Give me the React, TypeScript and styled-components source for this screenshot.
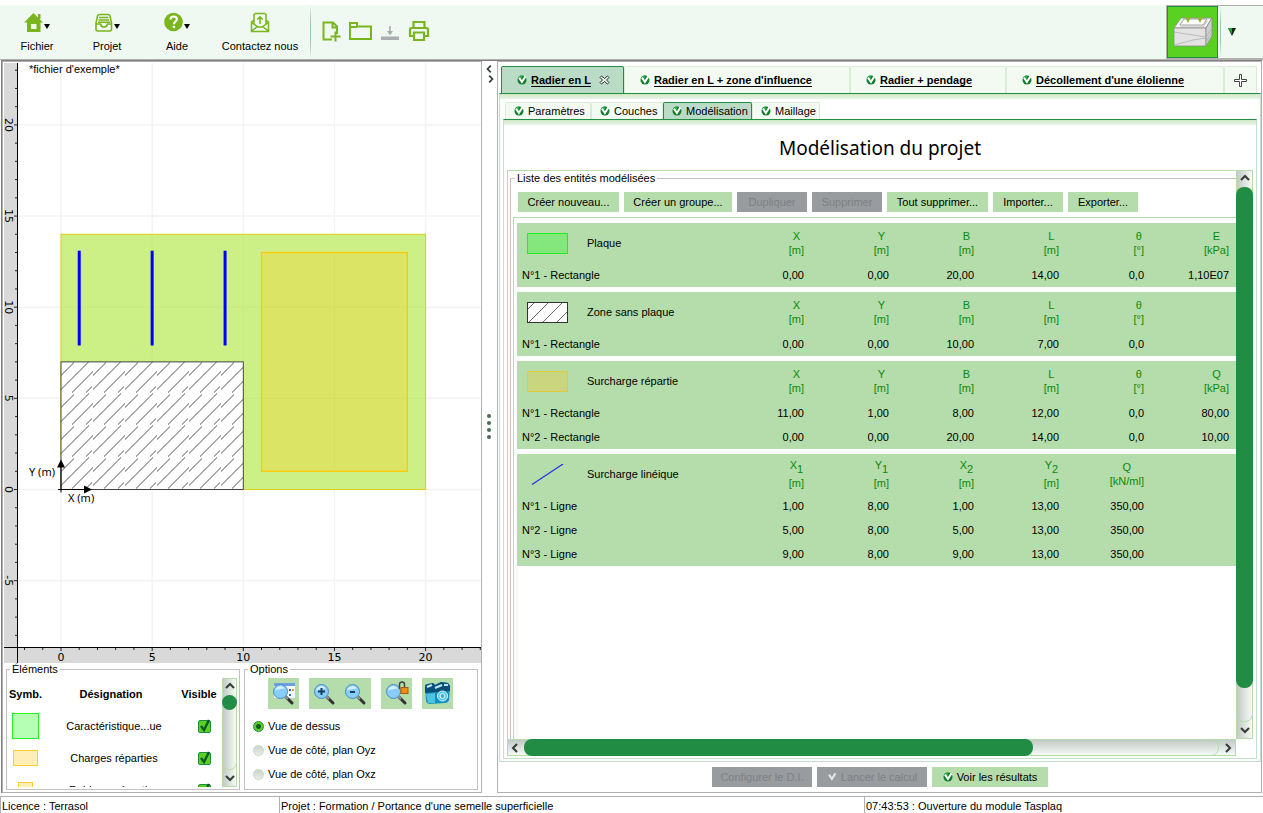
import React from 'react';
import styled, { createGlobalStyle, css } from 'styled-components';

const c = {
  green: '#218c44',
  pale: '#b5dcab',
  icon: '#7ab51d',
  grey: '#b0b0b0',
  line: '#c0c0c0',
  unit: '#0a8a0a',
};

const GlobalStyle = createGlobalStyle`
  * { box-sizing: border-box; }
  html, body { margin: 0; padding: 0; background: #fff; }
  body, button, input {
    font-family: "Liberation Sans", Arial, sans-serif;
    font-size: 11px;
    line-height: 12px;
    color: #000;
  }
  button { border: 0; margin: 0; padding: 0; background: none; }
  svg { display: block; }
`;

const Page = styled.div`
  display: flex;
  flex-direction: column;
  min-height: 100vh;
  padding-top: 5px;
`;

/* ---------- toolbar ---------- */

const Toolbar = styled.header`
  display: flex;
  align-items: stretch;
  height: 55px;
  padding-left: 2px;
  background: #eff9f2;
  border-bottom: 1px solid ${c.grey};
`;

const ToolMenu = styled.button<{ $wide?: boolean }>`
  display: flex;
  flex-direction: column;
  align-items: center;
  justify-content: space-between;
  width: ${p => (p.$wide ? 96 : 70)}px;
  padding: 7px 0;
`;

const ToolIcon = styled.span`
  display: flex;
  align-items: center;
  height: 22px;
`;

const Separator = styled.span`
  width: 1px;
  margin: 0 2px;
  background: linear-gradient(#eff9f2, #9cc9a6 30%, #9cc9a6 70%, #eff9f2);
`;

const QuickTools = styled.div`
  display: flex;
  align-items: center;
  gap: 7px;
  padding: 0 7px 2px;
`;

const ModuleArea = styled.div`
  display: flex;
  margin-left: auto;
  border: 1px solid ${c.grey};
  border-right: 0;
`;

const ModuleButton = styled.button`
  width: 51px;
  background: #58d121;
  border: 1px solid ${c.green};
  display: flex;
  align-items: center;
  justify-content: center;
`;

const ModuleArrow = styled.button`
  width: 40px;
  padding-left: 5px;
`;

/* ---------- main frame ---------- */

const Main = styled.main`
  flex: 1;
  display: flex;
  margin: 0 1px 3px 1px;
  border-top: 1px solid #808080;
  border-left: 1px solid #808080;
`;

const LeftPanel = styled.section`
  display: flex;
  flex-direction: column;
  flex: 0 0 480px;
  border: 1px solid ${c.grey};
  padding: 1px 0 2px 1px;
`;

const Splitter = styled.div`
  flex: 0 0 15px;
  display: flex;
  flex-direction: column;
  align-items: center;
  justify-content: center;
  position: relative;
  padding-right: 1px;
`;

const SplitterArrows = styled.div`
  position: absolute;
  top: 3px;
  left: 3px;
`;

const RightPanel = styled.section`
  flex: 1;
  min-width: 0;
  display: flex;
  flex-direction: column;
  border: 1px solid ${c.grey};
  padding: 4px 0 5px 1px;
`;

/* ---------- plot ---------- */

const Plot = styled.div`
  flex: 1;
  display: grid;
  grid-template-columns: 14px 1fr;
  grid-template-rows: minmax(0, 1fr) 16px;
`;

const Ruler = styled.svg`
  width: 100%;
  height: 100%;
  overflow: visible;
  background: #d9d9d9;
  font-family: "DejaVu Sans", sans-serif;
  font-size: 11px;
`;

const Canvas = styled.svg`
  width: 100%;
  height: 100%;
  background: #fff;
`;

const Corner = styled.div`
  background: #d9d9d9;
  border-top: 1px solid #000;
  border-right: 1px solid #000;
`;

const ORIGIN_X = 43;
const ORIGIN_Y = 426.5;
const UNIT = 18.23;
const sx = (v: number) => ORIGIN_X + v * UNIT;
const sy = (v: number) => ORIGIN_Y - v * UNIT;
const range = (a: number, b: number) => Array.from({ length: b - a + 1 }, (_, i) => a + i);
const fives = [-5, 0, 5, 10, 15, 20];

function PlotView() {
  return (
    <Plot>
      <Ruler>
        <line x1="13.5" x2="13.5" y1="0" y2="100%" stroke="#000" />
        {range(-8, 23).map(v => (
          <line key={v} x1={v % 5 ? 11 : 10} x2="13" y1={sy(v)} y2={sy(v)} stroke="#222" />
        ))}
        {fives.map(v => (
          <text key={v} transform={`translate(1 ${sy(v)}) rotate(90)`} textAnchor="middle">{v}</text>
        ))}
      </Ruler>
      <Canvas>
        <defs>
          <pattern id="hatch" x={sx(0)} y={sy(0)} width="32" height="32" patternUnits="userSpaceOnUse">
            <path d="M0 14 13 1M0 28 28 0M11 31 32 10M25 31 31 25" stroke="#555" fill="none" />
          </pattern>
        </defs>
        {fives.map(v => (
          <g key={v} stroke="#f3f3f3" strokeWidth="1.5">
            <line x1={sx(v)} x2={sx(v)} y1="0" y2="100%" />
            <line x1="0" x2="100%" y1={sy(v)} y2={sy(v)} />
          </g>
        ))}
        <rect x={sx(0)} y={sy(14)} width={20 * UNIT} height={14 * UNIT} fill="#ccf085" stroke="#e0cc10" strokeWidth="1" />
        <g stroke="#c6ea80">
          <line x1={sx(10)} x2={sx(10)} y1={sy(13.9)} y2={sy(0)} />
          <line x1={sx(5)} x2={sx(5)} y1={sy(13.9)} y2={sy(0)} />
          <line x1={sx(0.1)} x2={sx(19.9)} y1={sy(10)} y2={sy(10)} />
          <line x1={sx(0.1)} x2={sx(19.9)} y1={sy(5)} y2={sy(5)} />
        </g>
        <rect x={sx(11)} y={sy(13)} width={8 * UNIT} height={12 * UNIT} fill="#dbe465" stroke="#fcc800" strokeWidth="1.3" />
        <g stroke="#d5de60">
          <line x1={sx(15)} x2={sx(15)} y1={sy(12.9)} y2={sy(1.1)} />
          <line x1={sx(11.1)} x2={sx(18.9)} y1={sy(10)} y2={sy(10)} />
          <line x1={sx(11.1)} x2={sx(18.9)} y1={sy(5)} y2={sy(5)} />
        </g>
        <rect x={sx(0)} y={sy(7)} width={10 * UNIT} height={7 * UNIT} fill="#fff" />
        <rect x={sx(0)} y={sy(7)} width={10 * UNIT} height={7 * UNIT} fill="url(#hatch)" stroke="#444" />
        {[1, 5, 9].map(v => (
          <line key={v} x1={sx(v)} x2={sx(v)} y1={sy(13.1)} y2={sy(7.9)} stroke="#0000fa" strokeWidth="3" />
        ))}
        <g stroke="#000" strokeWidth="1">
          <line x1={sx(0) - 3} x2={sx(0) + 24} y1={sy(0)} y2={sy(0)} />
          <line x1={sx(0)} x2={sx(0)} y1={sy(0) + 3} y2={sy(0) - 24} />
        </g>
        <path d={`M${sx(0) + 23} ${sy(0) - 4}l8 4-8 4zM${sx(0) - 4} ${sy(0) - 22}l4-8 4 8z`} />
        <text x="11" y="10" fontSize="11">*fichier d'exemple*</text>
        <g fontFamily="Noto Sans, sans-serif" fontSize="11">
          <text x={sx(0) - 32} y={sy(0) - 14}>Y (m)</text>
          <text x={sx(0) + 7} y={sy(0) + 12}>X (m)</text>
        </g>
      </Canvas>
      <Corner />
      <Ruler>
        <line x1="0" x2="100%" y1="0.5" y2="0.5" stroke="#000" />
        {range(-2, 23).map(v => (
          <line key={v} x1={sx(v)} x2={sx(v)} y1="1" y2={v % 5 ? 3 : 4} stroke="#222" />
        ))}
        {fives.slice(1).map(v => (
          <text key={v} x={sx(v)} y="14" textAnchor="middle">{v}</text>
        ))}
      </Ruler>
    </Plot>
  );
}

/* ---------- shared controls ---------- */

const Group = styled.fieldset<{ $open?: boolean }>`
  min-width: 0;
  margin: 0;
  padding: 3px 1px 2px;
  border: 1px solid ${c.line};
  ${p => p.$open && css`
    border-right: 0;
    border-bottom: 0;
    padding: 8px 0 0 2px;
    flex: 1;
    display: flex;
    flex-direction: column;
  `}
`;

const GroupTitle = styled.legend`
  margin-left: 2px;
  padding: 0 2px;
`;

const ActionButton = styled.button<{ $width: number }>`
  display: flex;
  align-items: center;
  justify-content: center;
  gap: 4px;
  width: ${p => p.$width}px;
  height: 20px;
  white-space: nowrap;
  background: ${c.pale};
  &:disabled { background: #999c9f; color: #7d8083; }
`;

const Bar = styled.div<{ $horizontal?: boolean }>`
  display: flex;
  flex-direction: ${p => (p.$horizontal ? 'row' : 'column')};
  border: 1px solid ${c.pale};
  background: linear-gradient(${p => (p.$horizontal ? '180deg' : '90deg')}, #c2cac5, #f6faf7);
`;

const BarButton = styled.button`
  flex: 0 0 16px;
  display: flex;
  align-items: center;
  justify-content: center;
`;

const Track = styled.div<{ $horizontal?: boolean }>`
  flex: 1;
  display: flex;
  flex-direction: ${p => (p.$horizontal ? 'row' : 'column')};
  margin: ${p => (p.$horizontal ? '-1px 0' : '0 -1px')};
  border: 1px solid ${c.pale};
  border-radius: 8px;
`;

const Thumb = styled.div<{ $size: string }>`
  flex: 0 0 ${p => p.$size};
  margin: -1px;
  border-radius: 8px;
  background: ${c.green};
`;

const chevrons = {
  up: 'M1 6 5 2 9 6',
  down: 'M1 3 5 7 9 3',
  left: 'M6 1 2 5 6 9',
  right: 'M4 1 8 5 4 9',
};

function Chevron({ dir, small }: { dir: keyof typeof chevrons; small?: boolean }) {
  return (
    <svg width="10" height="10" viewBox={small ? '-1 -1 12 12' : '0 0 10 10'} fill="none" stroke="#333c36" strokeWidth="2">
      <path d={chevrons[dir]} />
    </svg>
  );
}

function ScrollBar({ horizontal, size }: { horizontal?: boolean; size: string }) {
  return (
    <Bar $horizontal={horizontal}>
      <BarButton aria-label={horizontal ? 'Gauche' : 'Haut'}><Chevron dir={horizontal ? 'left' : 'up'} /></BarButton>
      <Track $horizontal={horizontal}><Thumb $size={size} /></Track>
      <BarButton aria-label={horizontal ? 'Droite' : 'Bas'}><Chevron dir={horizontal ? 'right' : 'down'} /></BarButton>
    </Bar>
  );
}

function StatusDot({ muted }: { muted?: boolean }) {
  return (
    <svg width="10" height="10" viewBox="0 0 10 10">
      {!muted && <circle cx="5" cy="5" r="4.5" fill="#0f7d2b" />}
      {!muted && <path d="M1 2.500A4.500 4.500 0 0 1 5 .5L5 4z" fill="#22a83e" />}
      <path d="M2 2.600 4.900 7 8.400 1.400" fill="none" stroke={muted ? '#e4e6e7' : '#fff'} strokeWidth="2" />
    </svg>
  );
}

/* ---------- lower left ---------- */

const LowerLeft = styled.div`
  display: grid;
  grid-template-columns: 234px 1fr;
  gap: 4px;
  margin: 0 3px 0 2px;
`;

const ElementsBody = styled.div`
  display: grid;
  grid-template-columns: 1fr 15px;
  height: 109px;
  margin-right: 1px;
`;

const ElementsClip = styled.div`
  overflow: hidden;
`;

const ElementsTable = styled.table`
  width: 211px;
  table-layout: fixed;
  border-collapse: collapse;
  text-align: center;
  th, td { height: 32px; padding: 0; white-space: nowrap; }
  td:nth-child(2) { padding-left: 6px; }
  td:nth-child(3) { padding-left: 10px; }
`;

const Swatch = styled.span<{ $w: number; $h: number; $fill: string; $line: string }>`
  display: block;
  width: ${p => p.$w}px;
  height: ${p => p.$h}px;
  margin: 0 auto;
  background: ${p => p.$fill};
  border: 1px solid ${p => p.$line};
`;

const TickWrap = styled.span`
  position: relative;
  display: block;
  width: 13px;
  height: 13px;
  margin: 0 auto;
  svg { position: absolute; left: 0; bottom: 0; pointer-events: none; }
`;

const Tick = styled.input`
  appearance: none;
  display: block;
  width: 13px;
  height: 13px;
  margin: 0;
  border: 1px solid ${c.green};
  border-radius: 2px;
  background: #58d121;
`;

const elements = [
  { name: 'Caractéristique...ue', w: 27, h: 26, fill: '#b5ffb5', line: '#2df02d' },
  { name: 'Charges réparties', w: 25, h: 16, fill: '#ffeeb5', line: '#ffcc33' },
  { name: 'Raideurs réparties', w: 15, h: 16, fill: '#ffeeb5', line: '#ffcc33' },
];

const OptionIcons = styled.div`
  display: flex;
  gap: 10px;
  padding-left: 22px;
`;

const IconGroup = styled.div`
  display: flex;
  background: ${c.pale};
`;

const IconButton = styled.button`
  width: 31px;
  height: 31px;
  display: flex;
  align-items: center;
  justify-content: center;
`;

const RadioList = styled.div`
  padding: 5px 0 0 7px;
`;

const RadioLabel = styled.label`
  display: flex;
  align-items: center;
  gap: 4px;
  height: 24px;
`;

const Radio = styled.input`
  appearance: none;
  width: 11px;
  height: 11px;
  margin: 0;
  border-radius: 50%;
  border: 1px solid #c3dcc3;
  background: linear-gradient(#c8d2cb, #e8eeea);
  &:checked {
    border-color: ${c.green};
    background: radial-gradient(circle, #0c5c22 0 2px, #58d121 3px);
  }
`;

function Lens({ children, before }: { children?: React.ReactNode; before?: React.ReactNode }) {
  return (
    <svg width="25" height="25" viewBox="0 0 25 25">
      {before}
      <path d="M15 16 21 22" stroke="#333" strokeWidth="3" strokeLinecap="round" />
      <path d="M14 15 17 18" stroke="#999" strokeWidth="2" />
      <circle cx="9.500" cy="10.500" r="7" fill="#86cdf7" stroke="#4d8cc2" strokeWidth="1" />
      <path d="M4 9.500a5.500 5.500 0 0 1 10-2c-3 0-7 1-10 2z" fill="#d4effd" />
      {children}
    </svg>
  );
}

function LeftColumn() {
  return (
    <LeftPanel>
      <PlotView />
      <LowerLeft>
        <Group>
          <GroupTitle>Éléments</GroupTitle>
          <ElementsBody>
            <ElementsClip>
              <ElementsTable>
                <colgroup><col width="35" /><col /><col width="40" /></colgroup>
                <thead><tr><th>Symb.</th><th>Désignation</th><th>Visible</th></tr></thead>
                <tbody>
                  {elements.map(e => (
                    <tr key={e.name}>
                      <td><Swatch $w={e.w} $h={e.h} $fill={e.fill} $line={e.line} /></td>
                      <td>{e.name}</td>
                      <td>
                        <TickWrap>
                          <Tick type="checkbox" defaultChecked aria-label={e.name} />
                          <svg width="14" height="15" viewBox="0 0 14 15">
                            <path d="M3 8 6 12 11 2" fill="none" stroke="#0f5a2a" strokeWidth="2.400" />
                          </svg>
                        </TickWrap>
                      </td>
                    </tr>
                  ))}
                </tbody>
              </ElementsTable>
            </ElementsClip>
            <ScrollBar size="15px" />
          </ElementsBody>
        </Group>
        <Group>
          <GroupTitle>Options</GroupTitle>
          <OptionIcons>
            <IconGroup>
              <IconButton aria-label="Zoom étendu">
                <Lens before={<g><path d="M3 2h21v15H3z" fill="#f4f8fc" /><path d="M3 2h21v3H3z" fill="#6f9fe0" /><path d="M18 8h2v2h-2zM18 13h2v2h-2z" fill="#3c64c8" /><path d="M21 8h2v2h-2z" fill="#e09a30" /></g>} />
              </IconButton>
            </IconGroup>
            <IconGroup>
              <IconButton aria-label="Zoom avant">
                <Lens><path d="M6 10.500h7M9.500 7v7" stroke="#1b3c60" strokeWidth="2" /></Lens>
              </IconButton>
              <IconButton aria-label="Zoom arrière">
                <Lens><path d="M7 11h5" stroke="#1b3c60" strokeWidth="2" /></Lens>
              </IconButton>
            </IconGroup>
            <IconGroup>
              <IconButton aria-label="Verrouiller le zoom">
                <Lens>
                  <path d="M15.500 8V3.500a2.500 2.500 0 0 1 5 0V6" fill="none" stroke="#444" strokeWidth="1.500" />
                  <rect x="17" y="6.500" width="7" height="6" fill="#f08c14" stroke="#a85a08" />
                </Lens>
              </IconButton>
            </IconGroup>
            <IconGroup>
              <IconButton aria-label="Capture">
                <svg width="27" height="25" viewBox="0 0 27 25">
                  <path d="M1 6Q1 3 4 3L9 2 11 4 17 1 24 2 26 5 25 19Q24 22 21 22L5 23Q3 23 2 20z" fill="#1590bd" />
                  <path d="M1 6Q1 3 4 3L9 2 11 4 17 1 24 2 26 5 26 10 1 12z" fill="#0b4f78" />
                  <path d="M3 6 8 4M11 7 18 4M20 4 24 4" stroke="#bfeaf8" strokeWidth="2" />
                  <path d="M2 13 11 12 11 22 4 22z" fill="#4cc3e6" />
                  <circle cx="18.500" cy="15" r="5" fill="#54c8ea" stroke="#d9f5fc" />
                  <circle cx="18.500" cy="15" r="2.500" fill="#3fb0d8" stroke="#e8fbff" />
                </svg>
              </IconButton>
            </IconGroup>
          </OptionIcons>
          <RadioList>
            {['Vue de dessus', 'Vue de côté, plan Oyz', 'Vue de côté, plan Oxz'].map((t, i) => (
              <RadioLabel key={t}><Radio type="radio" name="vue" defaultChecked={i === 0} />{t}</RadioLabel>
            ))}
          </RadioList>
        </Group>
      </LowerLeft>
    </LeftPanel>
  );
}

/* ---------- tabs ---------- */

const Tabs = styled.nav<{ $inner?: boolean }>`
  display: flex;
  height: ${p => (p.$inner ? 17 : 27)}px;
  padding-left: 2px;
  font-weight: ${p => (p.$inner ? 400 : 700)};
`;

const Tab = styled.button<{ $active?: boolean; $width: number; $link?: boolean }>`
  display: flex;
  align-items: center;
  gap: 4px;
  flex: 0 1 ${p => p.$width}px;
  padding-left: ${p => (p.$link ? 15 : 8)}px;
  font-weight: inherit;
  white-space: nowrap;
  background: #f3faf2;
  border: 1px solid #d8ecd6;
  border-bottom: 0;
  border-radius: 2px 2px 0 0;
  ${p => p.$active && css`
    background: #badcc6;
    border-color: ${c.green};
  `}
`;

const TabText = styled.span<{ $link?: boolean }>`
  ${p => p.$link && css`
    margin-right: 4px;
    text-decoration: underline;
    text-underline-offset: 2px;
  `}
`;

const Pane = styled.div<{ $outer?: boolean }>`
  flex: 1;
  display: flex;
  flex-direction: column;
  min-height: 0;
  border: 1px solid #c5dfcf;
  border-top: 1px solid ${c.green};
  padding: ${p => (p.$outer ? '8px 3px 2px' : '0 3px 2px')};
  background: linear-gradient(#d0e8c2, #e9f3ea 5px, #fff 5px);
`;

const Title = styled.h1`
  margin: 0;
  height: 50px;
  padding-top: 5px;
  line-height: 46px;
  font-family: "Noto Sans", "Open Sans", sans-serif;
  font-size: 19px;
  font-weight: 400;
  text-align: center;
`;

const ScrollArea = styled.div`
  flex: 1;
  display: grid;
  grid-template-columns: minmax(0, 1fr) 17px;
  grid-template-rows: minmax(0, 1fr) 17px;
`;

const Viewport = styled.div`
  display: flex;
  flex-direction: column;
  overflow: hidden;
  border: 1px solid ${c.pale};
  border-width: 1px 0 0 1px;
  padding: 1px 0 0 2px;
`;

const Actions = styled.div`
  display: flex;
  gap: 5px;
  padding: 0 0 5px 5px;
`;

const EntityList = styled.div`
  flex: 1;
  display: flex;
  flex-direction: column;
  gap: 5px;
  border-left: 1px solid ${c.pale};
  border-top: 1px solid ${c.pale};
  padding: 5px 0 0 3px;
`;

const EntityTable = styled.table`
  width: 100%;
  table-layout: fixed;
  border-collapse: collapse;
  background: ${c.pale};
  th, td { padding: 0 7px 0 0; font-weight: 400; text-align: right; height: 24px; }
  thead th { height: 40px; }
  th:first-child { padding-left: 5px; text-align: left; }
`;

const EntityName = styled.span`
  display: flex;
  align-items: center;
  gap: 19px;
  padding-left: 5px;
`;

const Heading = styled.span`
  display: inline-block;
  line-height: 14px;
  text-align: center;
  vertical-align: middle;
  color: ${c.unit};
  sub { font-size: 11px; line-height: 14px; vertical-align: -4px; }
`;

const FooterActions = styled.div`
  display: flex;
  justify-content: center;
  gap: 5px;
  padding-top: 5px;
`;

type Col = [string, string, string?];
const geometry: Col[] = [['X', '[m]'], ['Y', '[m]'], ['B', '[m]'], ['L', '[m]'], ['θ', '[°]']];

const entities: { name: string; symbol: React.ReactNode; cols: Col[]; rows: string[][] }[] = [
  {
    name: 'Plaque',
    symbol: <rect x="0.5" y="0.5" width="40" height="20" fill="#84e77e" stroke="#1fee1f" />,
    cols: [...geometry, ['E', '[kPa]']],
    rows: [['N°1 - Rectangle', '0,00', '0,00', '20,00', '14,00', '0,0', '1,10E07']],
  },
  {
    name: 'Zone sans plaque',
    symbol: (
      <g fill="none">
        <rect x="0.5" y="0.5" width="40" height="20" fill="#fff" stroke="#333" />
        <path d="M1 7 7 1M2 20 21 1M16 20 35 1M30 20 40 10" stroke="#666" />
      </g>
    ),
    cols: geometry,
    rows: [['N°1 - Rectangle', '0,00', '0,00', '10,00', '7,00', '0,0']],
  },
  {
    name: 'Surcharge répartie',
    symbol: <rect x="0.5" y="0.5" width="40" height="20" fill="#cad580" stroke="#e6c93a" />,
    cols: [...geometry, ['Q', '[kPa]']],
    rows: [
      ['N°1 - Rectangle', '11,00', '1,00', '8,00', '12,00', '0,0', '80,00'],
      ['N°2 - Rectangle', '0,00', '0,00', '20,00', '14,00', '0,0', '10,00'],
    ],
  },
  {
    name: 'Surcharge linéique',
    symbol: <path d="M5 20.500 36 0" stroke="#2d35e0" strokeWidth="1.300" />,
    cols: [['X', '[m]', '1'], ['Y', '[m]', '1'], ['X', '[m]', '2'], ['Y', '[m]', '2'], ['Q', '[kN/ml]']],
    rows: [
      ['N°1 - Ligne', '1,00', '8,00', '1,00', '13,00', '350,00'],
      ['N°2 - Ligne', '5,00', '8,00', '5,00', '13,00', '350,00'],
      ['N°3 - Ligne', '9,00', '8,00', '9,00', '13,00', '350,00'],
    ],
  },
];

function Entity({ name, symbol, cols, rows }: (typeof entities)[number]) {
  const blanks = range(1, 6 - cols.length);
  return (
    <EntityTable>
      <colgroup><col />{range(1, 6).map(i => <col key={i} width="85" />)}</colgroup>
      <thead>
        <tr>
          <th scope="col"><EntityName><svg width="41" height="21">{symbol}</svg>{name}</EntityName></th>
          {cols.map(([label, unit, index], i) => (
            <th key={i} scope="col"><Heading>{label}{index && <sub>{index}</sub>}<br />{unit}</Heading></th>
          ))}
          {blanks.map(i => <th key={'b' + i} />)}
        </tr>
      </thead>
      <tbody>
        {rows.map(([head, ...values]) => (
          <tr key={head}>
            <th scope="row">{head}</th>
            {values.map((v, i) => <td key={i}>{v}</td>)}
            {blanks.map(i => <td key={'b' + i} />)}
          </tr>
        ))}
      </tbody>
    </EntityTable>
  );
}

function RightColumn() {
  return (
    <RightPanel>
      <Tabs>
        <Tab $active $link $width={123}>
          <StatusDot /><TabText $link>Radier en L</TabText>
          <svg width="11" height="10" viewBox="0 0 11 10">
            <path d="M2.500 1 5.500 3.500 8.500 1 10 2.500 7.500 5 10 7.500 8.500 9 5.500 6.500 2.500 9 1 7.500 3.500 5 1 2.500z" fill="#e8f3ec" stroke="#333" />
          </svg>
        </Tab>
        <Tab $link $width={226}><StatusDot /><TabText $link>Radier en L + zone d'influence</TabText></Tab>
        <Tab $link $width={156}><StatusDot /><TabText $link>Radier + pendage</TabText></Tab>
        <Tab $link $width={218}><StatusDot /><TabText $link>Décollement d'une élolienne</TabText></Tab>
        <Tab $width={33} aria-label="Ajouter un onglet">
          <svg width="15" height="15" viewBox="0 0 15 15">
            <path d="M6.500 1.500h2v5h5v2h-5v5h-2v-5h-5v-2h5z" fill="#fff" stroke="#444" />
          </svg>
        </Tab>
      </Tabs>
      <Pane $outer>
        <Tabs $inner>
          <Tab $width={86}><StatusDot /><TabText>Paramètres</TabText></Tab>
          <Tab $width={72}><StatusDot /><TabText>Couches</TabText></Tab>
          <Tab $width={89} $active><StatusDot /><TabText>Modélisation</TabText></Tab>
          <Tab $width={68}><StatusDot /><TabText>Maillage</TabText></Tab>
        </Tabs>
        <Pane>
          <Title>Modélisation du projet</Title>
          <ScrollArea>
            <Viewport>
              <Group $open>
                <GroupTitle>Liste des entités modélisées</GroupTitle>
                <Actions>
                  <ActionButton $width={101}>Créer nouveau...</ActionButton>
                  <ActionButton $width={108}>Créer un groupe...</ActionButton>
                  <ActionButton $width={70} disabled>Dupliquer</ActionButton>
                  <ActionButton $width={70} disabled>Supprimer</ActionButton>
                  <ActionButton $width={101}>Tout supprimer...</ActionButton>
                  <ActionButton $width={70}>Importer...</ActionButton>
                  <ActionButton $width={70}>Exporter...</ActionButton>
                </Actions>
                <EntityList>
                  {entities.map(e => <Entity key={e.name} {...e} />)}
                </EntityList>
              </Group>
            </Viewport>
            <ScrollBar size="94%" />
            <ScrollBar horizontal size="73.4%" />
          </ScrollArea>
        </Pane>
      </Pane>
      <FooterActions>
        <ActionButton $width={100} disabled>Configurer le D.I.</ActionButton>
        <ActionButton $width={110} disabled><StatusDot muted />Lancer le calcul</ActionButton>
        <ActionButton $width={116}><StatusDot />Voir les résultats</ActionButton>
      </FooterActions>
    </RightPanel>
  );
}

/* ---------- status bar ---------- */

const StatusBar = styled.footer`
  display: grid;
  grid-template-columns: 279px 585fr 399fr;
  border-top: 1px solid ${c.grey};
`;

const StatusCell = styled.div`
  height: 16px;
  padding: 3px 0 0 1px;
  border-left: 1px solid ${c.grey};
  white-space: nowrap;
`;

const Caret = () => (
  <svg width="6" height="22" viewBox="0 0 6 22"><path d="M0 12h6l-3 5z" /></svg>
);

export default function App() {
  return (
    <>
      <GlobalStyle />
      <Page>
        <Toolbar>
          <ToolMenu>
            <ToolIcon>
              <svg width="20" height="22" viewBox="0 0 20 22">
                <path fillRule="evenodd" fill={c.icon} d="M9.500 1 19 10.500H16.500V20H3V10.500H0zM7 12v5h5.500v-5z" />
                <path d="M14 2h2.500v5H14z" fill={c.icon} />
              </svg>
              <Caret />
            </ToolIcon>
            Fichier
          </ToolMenu>
          <ToolMenu>
            <ToolIcon>
              <svg width="20" height="22" viewBox="0 0 20 22" fill="none" stroke={c.icon} strokeWidth="1.600">
                <path d="M2 11 3.500 4Q4 2.500 5.500 2.500h8.500Q15.500 2.500 16 4l1.500 7v6.500q0 1.500-1.500 1.500H3.500Q2 19 2 17.500zM2 12h4.500q.5 3 3.500 3t3.500-3h4M5 5.500h9.500M4.500 8h10.500M4 10.200h12" />
              </svg>
              <Caret />
            </ToolIcon>
            Projet
          </ToolMenu>
          <ToolMenu>
            <ToolIcon>
              <svg width="20" height="22" viewBox="0 0 20 22" fill="none">
                <circle cx="9.500" cy="10" r="9.300" fill={c.icon} />
                <path d="M6.500 7.500q0-3 3.200-3t3.200 2.700c0 2.300-3 2.300-3 5" stroke="#fff" strokeWidth="2.200" />
                <path d="M8.700 13.800h2.400v2.300H8.700z" fill="#fff" />
              </svg>
              <Caret />
            </ToolIcon>
            Aide
          </ToolMenu>
          <ToolMenu $wide>
            <ToolIcon>
              <svg width="20" height="22" viewBox="0 0 20 22" fill="none" stroke={c.icon} strokeWidth="1.500">
                <path d="M4 8 1.500 10v9.500h17V10L16 8M4 12V2.500L5.500 1.500h9L16 2.500V12M1.500 10.500l6.500 4.500h4l6.500-4.500M1.500 19l6-4.500M18.500 19l-6-4.500M10 12V5M7.200 7.500 10 4.700l2.800 2.800" />
              </svg>
            </ToolIcon>
            Contactez nous
          </ToolMenu>
          <Separator />
          <QuickTools>
            <button aria-label="Nouveau">
              <svg width="22" height="24" viewBox="0 0 22 24" fill="none" stroke={c.icon} strokeWidth="2">
                <path d="M12 20.500H3.500V3.500h9.500l4 4V15M12.500 4v4.500H17M10.500 17.500h10M15.500 12.500v10" />
              </svg>
            </button>
            <button aria-label="Ouvrir">
              <svg width="23" height="22" viewBox="0 0 23 22" fill="none" stroke={c.icon} strokeWidth="2">
                <path d="M1 19V3h7v3.500h14V19zM1 7h7" />
              </svg>
            </button>
            <button aria-label="Enregistrer">
              <svg width="22" height="22" viewBox="0 0 22 22" fill="#a9adb0">
                <path d="M2 16.500h18v3.500H2zM10.200 6h1.600v5h2.200l-3 4.500-3-4.500h2.200z" />
              </svg>
            </button>
            <button aria-label="Imprimer">
              <svg width="22" height="22" viewBox="0 0 22 22" fill="none" stroke={c.icon} strokeWidth="2.200">
                <path d="M5.500 7.500V2h11v5.500M5 16H2V9.500Q2 8 3.500 8h15Q20 8 20 9.500V16h-3M6 12.500h10V20H6z" />
              </svg>
            </button>
          </QuickTools>
          <ModuleArea>
            <ModuleButton aria-label="Module Tasplaq">
              <svg width="40" height="32" viewBox="0 0 40 32" stroke="#8a8a8a" strokeWidth=".8">
                <path d="M1 12 8 2H39L33 12z" fill="#f2f2f2" />
                <path d="M1 12H33V30H1z" fill="#e3e3e3" />
                <path d="M33 12 39 2V20L33 30z" fill="#cfcfcf" />
                <path d="M7 9 11 3H34L30 9z" fill="#fff" />
                <path d="M1 16 33 21 39 12M1 29 20 24 33 22M33 26 39 16M7 11H30L34 5" fill="none" stroke="#b0b0b0" />
                <path d="M12 1h6l-3 6zM24 1h6l-3 6z" fill="#8cb829" stroke="none" />
              </svg>
            </ModuleButton>
            <Separator />
            <ModuleArrow aria-label="Choisir un module">
              <svg width="10" height="10" viewBox="0 0 10 10">
                <path d="M0 1h8L4 9z" fill="#072b0c" /><path d="M0 1h4v6z" fill="#1fa32f" />
              </svg>
            </ModuleArrow>
          </ModuleArea>
        </Toolbar>
        <Main>
          <LeftColumn />
          <Splitter>
            <SplitterArrows><Chevron dir="left" small /><Chevron dir="right" small /></SplitterArrows>
            <svg width="4" height="26" viewBox="0 0 4 26" fill="#4f6b55">
              {[2, 9, 16, 23].map(y => <circle key={y} cx="2" cy={y} r="2" />)}
            </svg>
          </Splitter>
          <RightColumn />
        </Main>
        <StatusBar>
          <StatusCell>Licence : Terrasol</StatusCell>
          <StatusCell>Projet : Formation / Portance d'une semelle superficielle</StatusCell>
          <StatusCell>07:43:53 : Ouverture du module Tasplaq</StatusCell>
        </StatusBar>
      </Page>
    </>
  );
}
